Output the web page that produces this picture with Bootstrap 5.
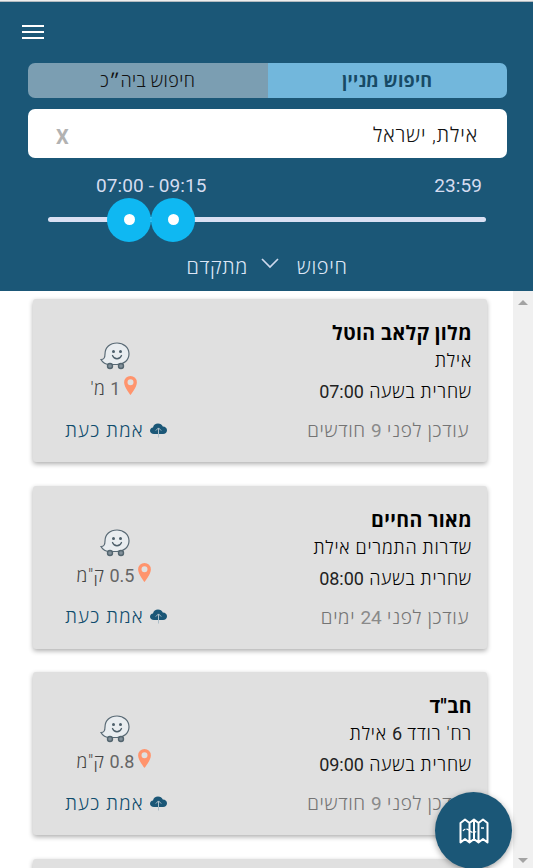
<!DOCTYPE html>
<html lang="he">
<head>
<meta charset="utf-8">
<meta name="viewport" content="width=device-width, initial-scale=1">
<title>חיפוש מניין</title>
<link href="https://cdn.jsdelivr.net/npm/bootstrap@5.3.0/dist/css/bootstrap.min.css" rel="stylesheet">
<style>
body{font-family:Roboto,"Open Sans",sans-serif;font-size:18px;color:#000;background:#fff}
.app{height:868px}
.topbar{height:291px;background:#1b5777;border-top:1px solid #eee;box-shadow:inset 0 1px #b4bbc0;padding:0 26px 0 28px}
.burger{width:22px;height:14px;margin:24px 0 0 -6px}
.burger span{height:2px;background:#fff}
.tabs{height:35px;margin-top:24px;border-radius:7px}
.tabs button{border:0;padding:0;font-size:18px;line-height:35px;color:#111;background:#7b9eb2;letter-spacing:.4px;font-weight:300}
.tabs button.on{background:#72b7dc;color:#174a65;font-weight:700;letter-spacing:.2px}
.place{height:49px;margin-top:11px;border-radius:7px;padding:3px 29px 0 28px;font-size:20px;color:#111}
.where{font-weight:300;letter-spacing:.9px}
.clear{font-size:20px;font-weight:700;color:#b2b2b2;padding-top:3px}
.times{height:36px;padding:10px 25px 0 68px;font-size:19px;line-height:36px;color:#d5dcf0;letter-spacing:.1px}
.slider{position:relative;height:44px;margin:4px 21px 0 20px}
.track{height:5px;border-radius:3px;background:#dae0f3;margin-top:-1px}
.knob{position:absolute;top:0;width:44px;height:44px;border-radius:50%;background:#0fb8f2}
.knob::after{content:"";width:11px;height:11px;border-radius:50%;background:#fff;margin-top:-1px}
.k1{left:59px}.k2{left:103px}
.more{height:48px;color:#dde6f6;font-size:20px;font-weight:300;letter-spacing:.7px;padding:2px 1px 0 0}
.more svg{margin:-6px 15px 0 10px}
.results{padding:8px 26px 0 33px;gap:23.7px}
.minyan{height:163px;flex:none;background:#e0e0e0;border-radius:3px;box-shadow:0 2px 5px rgba(0,0,0,.32);padding:20px 15px 0 0}
.num{font-weight:400;letter-spacing:0}
.info{line-height:28px;font-weight:300;letter-spacing:.8px}
.info .num{color:#222}
.info h2{font-size:19.500px;font-weight:700;line-height:29px;height:28px;margin:0;letter-spacing:.4px}
.info .hour{line-height:34px}
.info .updated{line-height:43px;color:#747474;padding-right:3px;font-size:19px;letter-spacing:.65px}
.info .updated .num{color:#8a8a8a}
.side{width:164px;padding-top:23px}
.dist{height:27px;color:#444;gap:4px;margin-top:5px;font-weight:300;letter-spacing:.5px;margin-right:2px}
.dist .num{color:#666}
.dist svg{margin-top:1px}
.verify{height:42px;color:#0f4c6d;gap:6px;margin:8px 0 0 2px;text-decoration:none;font-weight:300;font-size:19px;letter-spacing:1.2px}
.verify svg{margin-bottom:2px}
.rail{width:20px;background:#f0f0f0;padding:9px 0 5px}
.fab{position:absolute;left:435px;top:792px;width:77px;height:77px;border-radius:50%;background:#1b5777;box-shadow:0 2px 6px rgba(0,0,0,.35);border:0;padding:0}
</style>
<script src="https://cdn.jsdelivr.net/npm/bootstrap@5.3.0/dist/js/bootstrap.bundle.min.js"></script>
</head>
<body class="overflow-hidden">
<svg width="0" height="0" class="d-block">
<symbol id="waze" viewBox="0 0 30 28"><path d="M1 17.500c3 0 4-1.500 4-5.500C5 5.500 10 1 17 1c6.500 0 12 4.500 12 10.800 0 6.300-5 10.700-12 10.700H10C6 22.500 2.500 20.500 1 17.500Z" fill="#e9edf0" stroke="#596a75" stroke-width="1.200"/><circle cx="13.500" cy="9.500" r="1.500" fill="#4e606b"/><circle cx="20.500" cy="9.500" r="1.500" fill="#4e606b"/><path d="M12.500 13.500c1.700 4.300 7.300 4.300 9 0" fill="none" stroke="#4e606b" stroke-width="1.300" stroke-linecap="round"/><circle cx="10" cy="24" r="2.500" fill="#82909a" stroke="#53656f" stroke-width="1.400"/><circle cx="21" cy="24" r="2.500" fill="#82909a" stroke="#53656f" stroke-width="1.400"/></symbol>
<symbol id="pin" viewBox="0 0 13 19"><path fill="#ff946d" fill-rule="evenodd" d="M6.500 0A6.400 6.400 0 0 0 .1 6.400C.1 11 6.500 19 6.500 19s6.400-8 6.400-12.600A6.400 6.400 0 0 0 6.500 0Zm0 3.300a3 3 0 1 1 0 6 3 3 0 0 1 0-6Z"/></symbol>
<symbol id="cloud" viewBox="0 0 17 15"><path fill="#1b5777" d="M4 11C1.500 11 0 9.700 0 7.800 0 6 1.300 4.800 3 4.600 3.400 2 5.500.5 8 .5c2.300 0 4 1 4.800 3C15.500 3.600 17 5.300 17 7.300 17 9.500 15.400 11 13 11Z"/><path d="M8.500 14.500V5M5.800 7.600 8.500 4.900l2.700 2.700" fill="none" stroke="#aebfc9" stroke-width="1"/></symbol>
</svg>
<div class="app d-flex flex-column">
<header class="topbar flex-shrink-0">
<div class="burger d-flex flex-column justify-content-between"><span></span><span></span><span></span></div>
<div class="tabs d-flex overflow-hidden"><button class="w-50" dir="rtl">חיפוש ביה״כ</button><button class="w-50 on" dir="rtl">חיפוש מניין</button></div>
<div class="place bg-white d-flex justify-content-between align-items-center"><span class="clear">X</span><span class="where" dir="rtl">אילת, ישראל</span></div>
<div class="times d-flex justify-content-between"><span>07:00 - 09:15</span><span>23:59</span></div>
<div class="slider d-flex align-items-center"><div class="track w-100"></div><span class="knob k1 d-flex align-items-center justify-content-center"></span><span class="knob k2 d-flex align-items-center justify-content-center"></span></div>
<div class="more d-flex justify-content-center align-items-center" dir="rtl"><span>חיפוש</span><svg width="24" height="16" viewBox="0 0 24 16"><path d="m4 3 8 8 8-8" fill="none" stroke="#ced9ed" stroke-width="1.700"/></svg><span>מתקדם</span></div>
</header>
<div class="d-flex flex-grow-1 overflow-hidden">
<main class="results d-flex flex-column flex-grow-1">
<article class="minyan d-flex justify-content-between">
<div class="side d-flex flex-column align-items-center"><svg width="30" height="28"><use href="#waze"/></svg><div class="dist d-flex" dir="rtl"><svg width="13" height="19"><use href="#pin"/></svg><span><span class="num">1</span> מ'</span></div><a class="verify d-flex align-items-center" dir="rtl"><svg width="17" height="15"><use href="#cloud"/></svg><span>אמת כעת</span></a></div>
<div class="info" dir="rtl"><h2>מלון קלאב הוטל</h2><div>אילת</div><div class="hour">שחרית בשעה <span class="num">07:00</span></div><div class="updated">עודכן לפני <span class="num">9</span> חודשים</div></div>
</article>
<article class="minyan d-flex justify-content-between">
<div class="side d-flex flex-column align-items-center"><svg width="30" height="28"><use href="#waze"/></svg><div class="dist d-flex" dir="rtl"><svg width="13" height="19"><use href="#pin"/></svg><span><span class="num">0.5</span> ק"מ</span></div><a class="verify d-flex align-items-center" dir="rtl"><svg width="17" height="15"><use href="#cloud"/></svg><span>אמת כעת</span></a></div>
<div class="info" dir="rtl"><h2>מאור החיים</h2><div>שדרות התמרים אילת</div><div class="hour">שחרית בשעה <span class="num">08:00</span></div><div class="updated">עודכן לפני <span class="num">24</span> ימים</div></div>
</article>
<article class="minyan d-flex justify-content-between">
<div class="side d-flex flex-column align-items-center"><svg width="30" height="28"><use href="#waze"/></svg><div class="dist d-flex" dir="rtl"><svg width="13" height="19"><use href="#pin"/></svg><span><span class="num">0.8</span> ק"מ</span></div><a class="verify d-flex align-items-center" dir="rtl"><svg width="17" height="15"><use href="#cloud"/></svg><span>אמת כעת</span></a></div>
<div class="info" dir="rtl"><h2>חב"ד</h2><div>רח' רודד <span class="num">6</span> אילת</div><div class="hour">שחרית בשעה <span class="num">09:00</span></div><div class="updated">עודכן לפני <span class="num">9</span> חודשים</div></div>
</article>
<article class="minyan"></article>
</main>
<aside class="rail d-flex flex-column justify-content-between align-items-center flex-shrink-0"><svg width="10" height="5"><path d="m0 5 5-5 5 5Z" fill="#a3a3a3"/></svg><svg width="10" height="5"><path d="m0 0 5 5 5-5Z" fill="#a3a3a3"/></svg></aside>
</div>
</div>
<button class="fab d-flex align-items-center justify-content-center" aria-label="מפה"><svg width="30" height="26" viewBox="0 0 30 26" fill="none" stroke="#fff"><path d="m1.500 5 4.500-3.500 4.500 3.500L15 1.500 19.500 5 24 1.500 28.500 5v19.500L24 21l-4.500 3.500L15 21l-4.500 3.500L6 21l-4.500 3.500ZM10.500 5v19M15 2v19M19.500 5v19" stroke-width="2" stroke-linejoin="round"/><path d="M4 13c2-3 5-2 7 0s4 2 7 0M22 10h4" stroke-width="1.300" stroke-dasharray="3 1"/></svg></button>
</body>
</html>
